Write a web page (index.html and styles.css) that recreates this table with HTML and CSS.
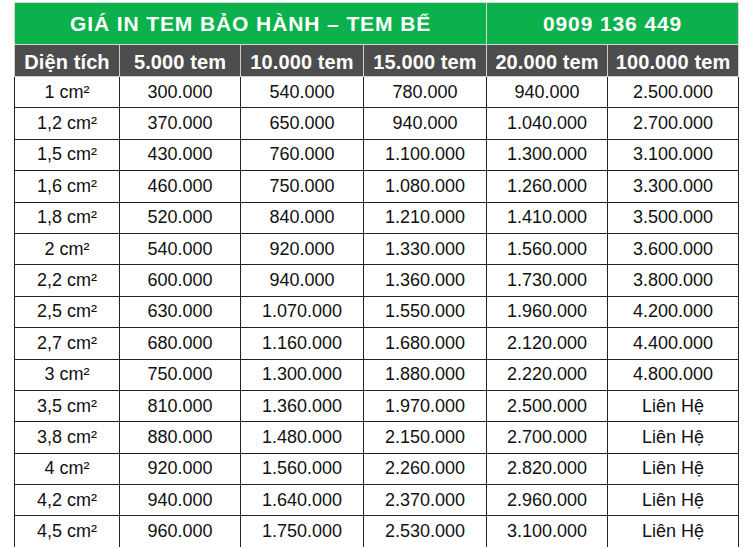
FILE: index.html
```html
<!DOCTYPE html>
<html lang="vi">
<head>
<meta charset="utf-8">
<title>Giá in tem bảo hành – tem bể</title>
<link rel="stylesheet" href="styles.css">
</head>
<body>
<div class="frame">
<table class="price">
  <colgroup>
    <col class="c1"><col class="c2"><col class="c3"><col class="c4"><col class="c5"><col class="c6">
  </colgroup>
  <thead>
    <tr class="title">
      <th colspan="4">GIÁ IN TEM BẢO HÀNH – TEM BỂ</th>
      <th colspan="2">0909 136 449</th>
    </tr>
    <tr class="head">
      <th>Diện tích</th>
      <th>5.000 tem</th>
      <th>10.000 tem</th>
      <th>15.000 tem</th>
      <th>20.000 tem</th>
      <th>100.000 tem</th>
    </tr>
  </thead>
  <tbody>
    <tr><td>1 cm²</td><td>300.000</td><td>540.000</td><td>780.000</td><td>940.000</td><td>2.500.000</td></tr>
    <tr><td>1,2 cm²</td><td>370.000</td><td>650.000</td><td>940.000</td><td>1.040.000</td><td>2.700.000</td></tr>
    <tr><td>1,5 cm²</td><td>430.000</td><td>760.000</td><td>1.100.000</td><td>1.300.000</td><td>3.100.000</td></tr>
    <tr><td>1,6 cm²</td><td>460.000</td><td>750.000</td><td>1.080.000</td><td>1.260.000</td><td>3.300.000</td></tr>
    <tr><td>1,8 cm²</td><td>520.000</td><td>840.000</td><td>1.210.000</td><td>1.410.000</td><td>3.500.000</td></tr>
    <tr><td>2 cm²</td><td>540.000</td><td>920.000</td><td>1.330.000</td><td>1.560.000</td><td>3.600.000</td></tr>
    <tr><td>2,2 cm²</td><td>600.000</td><td>940.000</td><td>1.360.000</td><td>1.730.000</td><td>3.800.000</td></tr>
    <tr><td>2,5 cm²</td><td>630.000</td><td>1.070.000</td><td>1.550.000</td><td>1.960.000</td><td>4.200.000</td></tr>
    <tr><td>2,7 cm²</td><td>680.000</td><td>1.160.000</td><td>1.680.000</td><td>2.120.000</td><td>4.400.000</td></tr>
    <tr><td>3 cm²</td><td>750.000</td><td>1.300.000</td><td>1.880.000</td><td>2.220.000</td><td>4.800.000</td></tr>
    <tr><td>3,5 cm²</td><td>810.000</td><td>1.360.000</td><td>1.970.000</td><td>2.500.000</td><td>Liên Hệ</td></tr>
    <tr><td>3,8 cm²</td><td>880.000</td><td>1.480.000</td><td>2.150.000</td><td>2.700.000</td><td>Liên Hệ</td></tr>
    <tr><td>4 cm²</td><td>920.000</td><td>1.560.000</td><td>2.260.000</td><td>2.820.000</td><td>Liên Hệ</td></tr>
    <tr><td>4,2 cm²</td><td>940.000</td><td>1.640.000</td><td>2.370.000</td><td>2.960.000</td><td>Liên Hệ</td></tr>
    <tr><td>4,5 cm²</td><td>960.000</td><td>1.750.000</td><td>2.530.000</td><td>3.100.000</td><td>Liên Hệ</td></tr>
  </tbody>
</table>
</div>
</body>
</html>
```
FILE: styles.css
```css
html, body {
  margin: 0;
  padding: 0;
  background: #ffffff;
}
.frame {
  padding: 2px 0 0 14px;
}
.price {
  border-collapse: collapse;
  table-layout: fixed;
  width: 724px;
  font-family: "Liberation Sans", Arial, sans-serif;
  color: #111111;
  border: 1px solid #c8c8c8;
}
.c1 { width: 105px; }
.c2 { width: 121px; }
.c3 { width: 123px; }
.c4 { width: 123px; }
.c5 { width: 121px; }
.c6 { width: 131px; }

.price th, .price td {
  padding: 0;
  text-align: center;
  white-space: nowrap;
  overflow: hidden;
}
.title th {
  height: 41px;
  background: #0bb14b;
  color: #ffffff;
  font-size: 21px;
  font-weight: bold;
  letter-spacing: 0.9px;
  border: 1px solid #d8d8d8;
}
.head th {
  height: 27px;
  background: #4d4d4d;
  color: #ffffff;
  font-size: 20px;
  font-weight: bold;
  letter-spacing: 0.1px;
  border: 1px solid #d0d0d0;
  padding-top: 4px;
}
.price td {
  height: 31.4px;
  font-size: 18px;
  border: 1.5px solid #222222;
  box-sizing: border-box;
}
```
